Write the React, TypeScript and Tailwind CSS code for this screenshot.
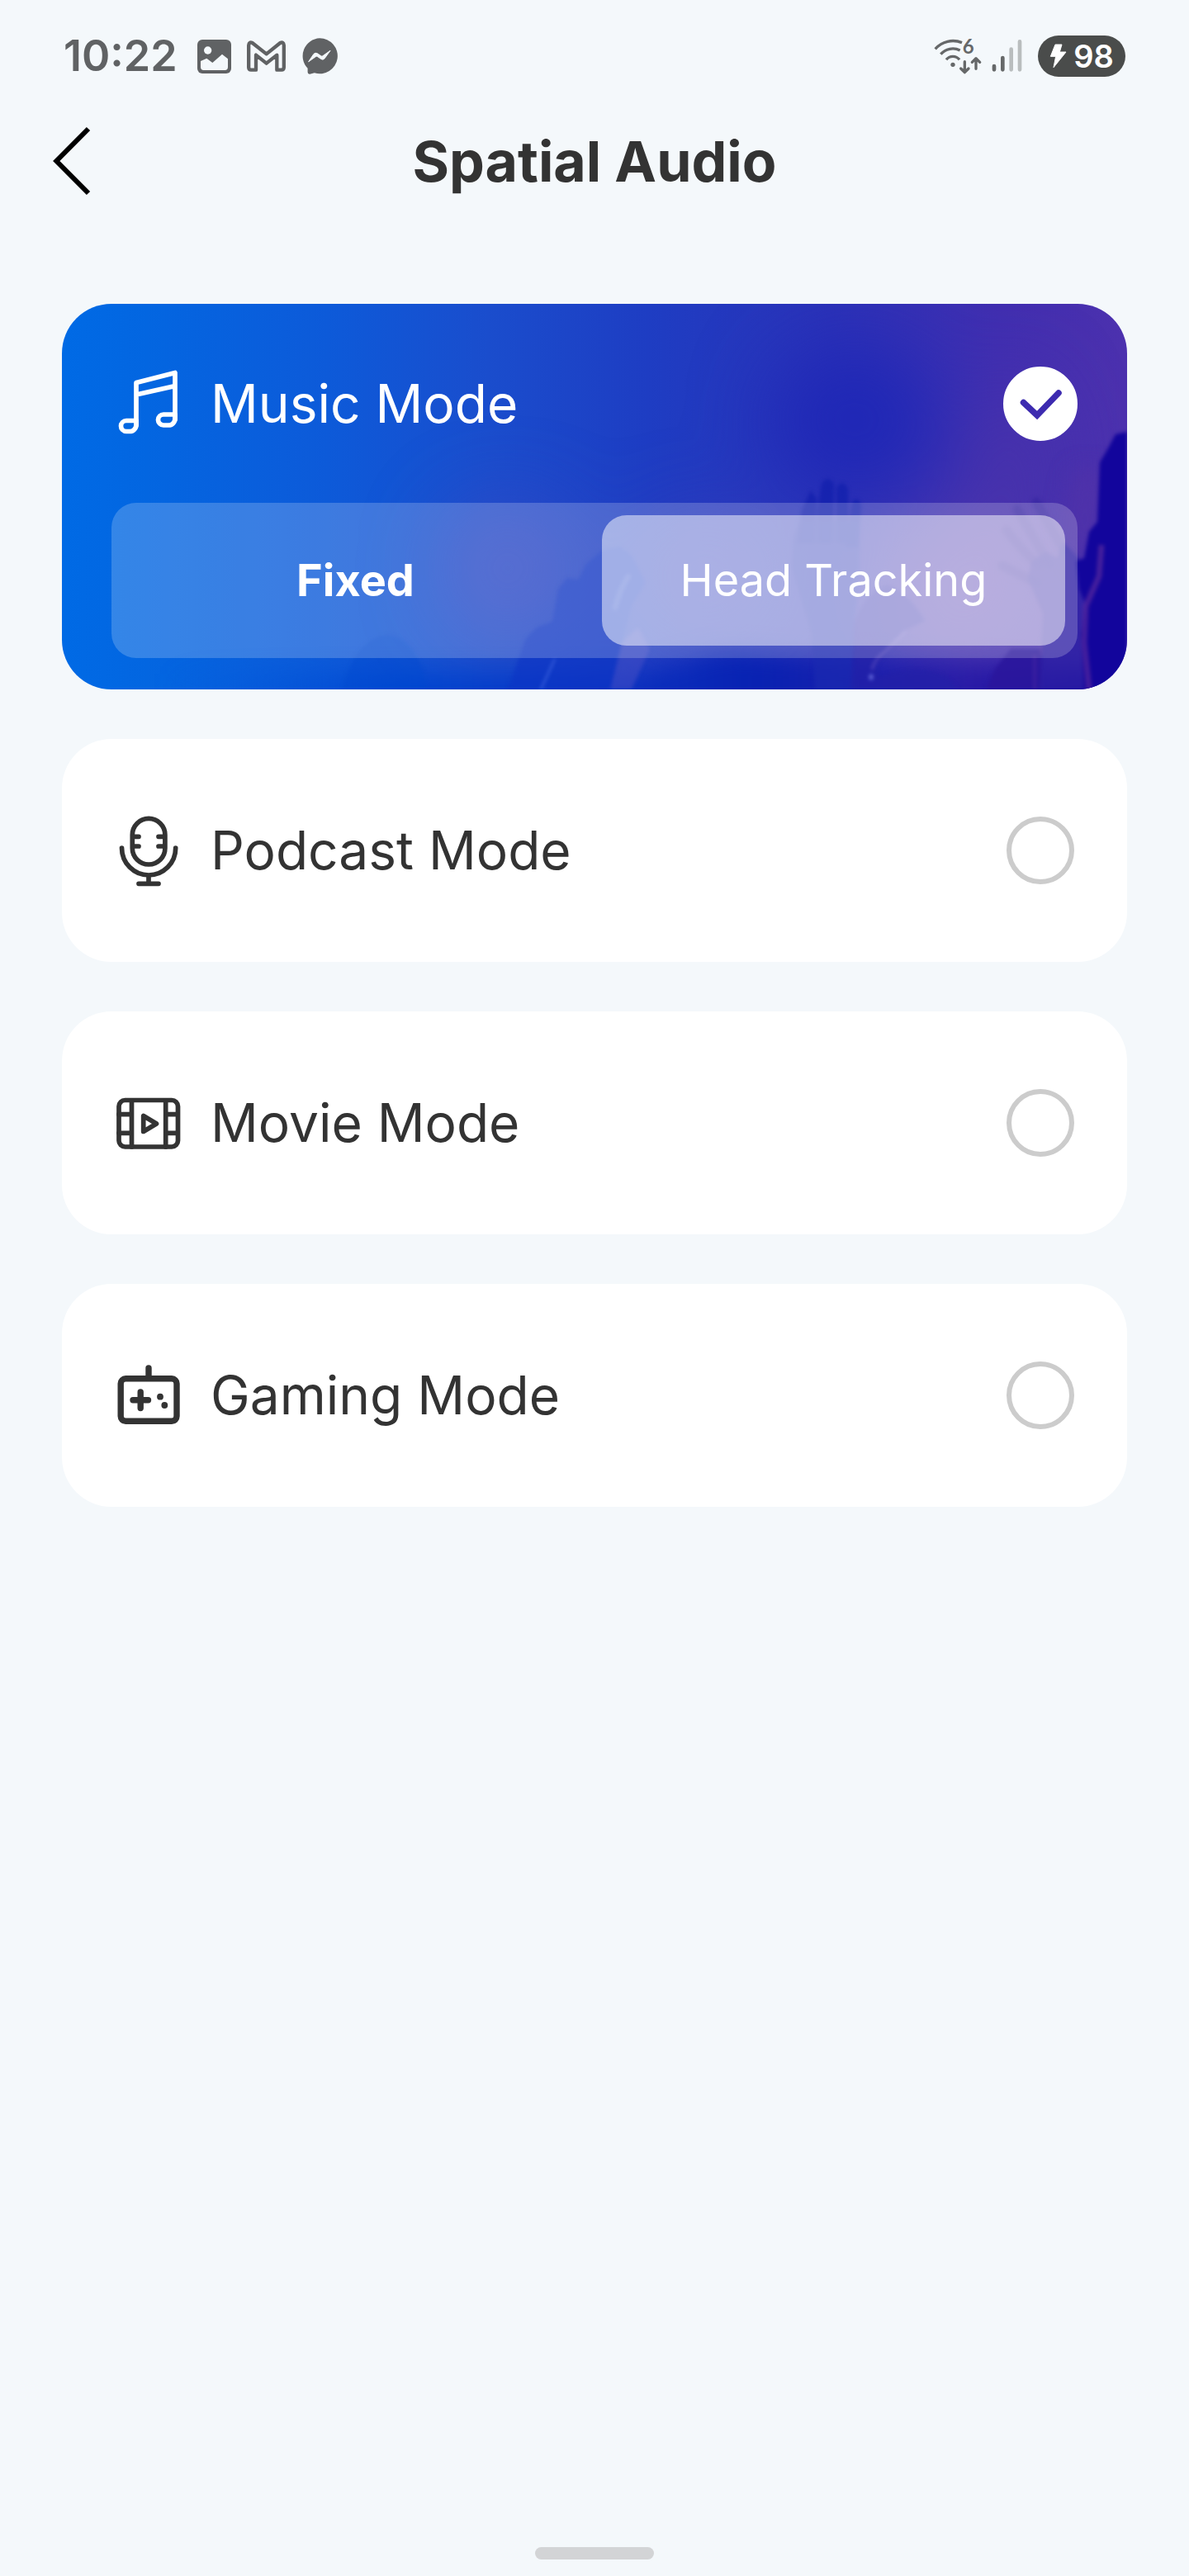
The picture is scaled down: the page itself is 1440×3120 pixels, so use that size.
import React, { useState } from "react";

function ImageIcon() {
  return (
    <svg viewBox="0 0 123 123" className="size-[41px]" aria-hidden="true">
      <rect width="123" height="123" rx="18" fill="#606264" />
      <circle cx="38" cy="39" r="14" fill="#f4f8fb" />
      <path d="M12 78 34 68 55 84 90 53 111 70V100q0 11-11 11H23q-11 0-11-11z" fill="#f4f8fb" />
    </svg>
  );
}

function GmailIcon() {
  return (
    <svg viewBox="0 0 141 114" className="h-[38px] w-[47px]" fill="none" stroke="#606264" strokeWidth="13" strokeLinejoin="round" aria-hidden="true">
      <path d="M6.500 18Q8 3 20 9L71 49 121 9Q133 3 134.500 18V98Q134 107 126 107H109V53L71 83 33 53V107H15Q7 107 6.500 98Z" />
    </svg>
  );
}

function MessengerIcon() {
  return (
    <svg viewBox="0 0 133 133" className="size-[44px]" aria-hidden="true">
      <path d="M67 1a65 65 0 1 1-19 127l-17 4q-8 1-8-7v-14A65 65 0 0 1 67 1z" fill="#606264" />
      <path d="M26 87 45 59q6-7 14-2l13 9q3 2 6 0l28-20-21 29q-6 7-13 2L59 68q-3-2-6 0z" fill="#f4f8fb" stroke="#f4f8fb" strokeWidth="3" strokeLinejoin="round" />
    </svg>
  );
}

function NetworkIcon() {
  return (
    <svg viewBox="96 80 318 132" className="h-[44px] w-[106px] overflow-visible" fill="none" stroke="#666869" strokeLinecap="round" strokeLinejoin="round" aria-hidden="true">
      <g strokeWidth="10">
        <path strokeLinecap="butt" d="M98 120A86 86 0 0 1 195 97" />
        <path strokeLinecap="butt" d="M118 139A58 58 0 0 1 188 125" />
        <path strokeLinecap="butt" d="M138 159A30 30 0 0 1 186 159" />
      </g>
      <circle cx="162" cy="177" r="8" fill="#666869" stroke="none" />
      <text x="197" y="138" fontSize="72" fontWeight="700" fill="#666869" stroke="none" fontFamily="Lato, sans-serif">6</text>
      <path strokeWidth="10" d="M205 166V204M191 191 205 205 219 191M246 192V155M232 168 246 154 260 168" />
      <g strokeWidth="14">
        <path d="M312 182V195M343 152V195" />
        <path stroke="#b9bdbe" d="M374 121V195M405 93V195" />
      </g>
    </svg>
  );
}

function BoltIcon() {
  return (
    <svg viewBox="510 98 63 90" className="h-[30px] w-[21px]" aria-hidden="true">
      <path d="M531 101H555L547 128H570L525 184 533 144H514Z" fill="#fff" stroke="#fff" strokeWidth="3" strokeLinejoin="round" />
    </svg>
  );
}

const iconProps = {
  viewBox: "0 0 90 90",
  className: "size-[90px]",
  fill: "none",
  stroke: "currentColor",
  strokeWidth: 5.7,
  strokeLinecap: "round" as const,
  strokeLinejoin: "round" as const,
  "aria-hidden": true,
};

function MusicIcon() {
  return (
    <svg {...iconProps}>
      <path d="M30 71V19.500L77 7.500V64M30 34 77 23.500" />
      <path d="M30 65.500H18a6.500 6.500 0 0 0 0 13h4a8 8 0 0 0 8-8zM77 58H63a6.500 6.500 0 0 0 0 13h6a8 8 0 0 0 8-8z" />
    </svg>
  );
}

function MicIcon() {
  return (
    <svg {...iconProps}>
      <rect x="25.300" y="6.400" width="39.600" height="55.600" rx="19.800" />
      <path d="M26 28.300H33M26 40H33M57 28.300H64M57 40H64M12.500 42a32.600 33 0 0 0 65.200 0M45 76V85M33 85.300H57" />
    </svg>
  );
}

function MovieIcon() {
  return (
    <svg {...iconProps}>
      <rect x="9" y="17.500" width="71.500" height="56.500" rx="7.500" />
      <path d="M24.500 18V74M65.700 18V74M9 34.700H24M9 57.300H24M66 34.700H80M66 57.300H80" />
      <path d="M38.700 36.500V55.500L54.500 46Z" />
    </svg>
  );
}

function GameIcon() {
  return (
    <svg {...iconProps} strokeWidth={7.4}>
      <rect x="11.200" y="24.800" width="67.800" height="51.500" rx="6" />
      <path d="M45 12V24M35.200 41V60.500M26 50.700H44.500" />
      <g fill="currentColor" stroke="none">
        <circle cx="59" cy="46.700" r="3.900" />
        <circle cx="64.300" cy="57" r="3.900" />
      </g>
    </svg>
  );
}

function ConcertArt() {
  return (
    <svg viewBox="0 0 1290 467" preserveAspectRatio="none" className="absolute inset-0 size-full" aria-hidden="true">
      <defs>
        <linearGradient id="sky">
          <stop offset="0" stopColor="#006ae5" />
          <stop offset=".08" stopColor="#0366e1" />
          <stop offset=".25" stopColor="#0d5ad9" />
          <stop offset=".4" stopColor="#1a4dcd" />
          <stop offset=".55" stopColor="#1e3dc3" />
          <stop offset=".72" stopColor="#2b32b8" />
          <stop offset=".88" stopColor="#402eb0" />
          <stop offset="1" stopColor="#4c31ae" />
        </linearGradient>
        <linearGradient id="floor" gradientUnits="userSpaceOnUse" x1="0" y1="0" x2="1290" y2="0">
          <stop offset=".1" stopColor="#005ade" stopOpacity="0" />
          <stop offset=".32" stopColor="#0046d0" />
          <stop offset=".5" stopColor="#0c34c2" />
          <stop offset=".65" stopColor="#0822b2" />
          <stop offset=".85" stopColor="#2a1ca6" />
          <stop offset="1" stopColor="#10009a" />
        </linearGradient>
        <filter id="far" colorInterpolationFilters="sRGB" filterUnits="userSpaceOnUse" x="-200" y="-200" width="1700" height="900"><feGaussianBlur stdDeviation="48" /></filter>
        <filter id="mid" colorInterpolationFilters="sRGB" filterUnits="userSpaceOnUse" x="-200" y="-200" width="1700" height="900"><feGaussianBlur stdDeviation="14" /></filter>
        <filter id="near" colorInterpolationFilters="sRGB" filterUnits="userSpaceOnUse" x="-200" y="-200" width="1700" height="900"><feGaussianBlur stdDeviation="2" /></filter>
      </defs>
      <rect width="1290" height="467" fill="url(#sky)" />
      <g filter="url(#far)">
        <ellipse cx="960" cy="140" rx="100" ry="90" fill="#1c26b6" opacity=".85" />
        <ellipse cx="1150" cy="200" rx="45" ry="110" fill="#4b35aa" opacity=".8" />
        <ellipse cx="540" cy="320" rx="80" ry="80" fill="#3c48c2" opacity=".65" />
        <ellipse cx="780" cy="330" rx="90" ry="80" fill="#3a3cba" opacity=".5" />
        <ellipse cx="1090" cy="350" rx="90" ry="90" fill="#5238ac" opacity=".8" />
      </g>
      <path d="M1225 200H1262V290L1236 325 1212 270Z" fill="#5634a6" opacity=".5" filter="url(#mid)" />
      <path d="M130 448H700L800 420 920 428 1330 448V500H130Z" fill="url(#floor)" filter="url(#mid)" />
      <g filter="url(#near)">
        <path d="M340 467Q355 405 395 401 432 405 442 467Z" fill="#0048d0" opacity=".4" />
        <path d="M540 467 562 405 575 392 594 385 601 345 612 332 625 334 635 315 655 298 676 294 690 305 707 338 690 365 680 405 668 467Z" fill="#0c33c4" opacity=".6" />
        <path d="M664 467 678 410 698 392 712 418 690 467Z" fill="#4a50c6" opacity=".5" />
        <path d="M670 368Q676 345 686 330" stroke="#5a72d6" strokeWidth="6" strokeLinecap="round" fill="none" opacity=".35" />
        <path d="M580 467 597 430" stroke="#3a60dc" strokeWidth="2" />
        <path d="M907 226 914 236 913 290H890L896 250ZM920 218Q927 206 935 218L934 290H915V250ZM938 224Q944 210 952 224L953 290H938ZM957 240Q964 232 968 244L965 295H948Z" fill="#1421ae" opacity=".85" />
        <path d="M894 262 886 285 884 320 896 360 908 400 912 467H962L960 385 966 330 966 262Z" fill="#1a2ab0" opacity=".65" />
        <path d="M959 390Q970 350 1000 340 1028 352 1045 384L1024 394 985 440 990 452Q1060 430 1085 467H955Z" fill="#2420a8" opacity=".65" />
        <path d="M981 443Q984 430 996 422 1010 408 1022 396" stroke="#6f5bc8" strokeWidth="3" fill="none" opacity=".5" />
        <path d="M980 451V453" stroke="#6064d8" strokeWidth="5" strokeLinecap="round" />
        <path d="M1120 467 1130 442 1149 418H1188V467Z" fill="#2a169c" opacity=".9" />
        <g stroke="#3a28a4" strokeLinecap="round" fill="none" strokeWidth="11" opacity=".8">
          <path d="M1144 274Q1160 296 1182 316M1157 249 1195 315M1180 240 1214 300M1139 317 1180 338" />
        </g>
        <path d="M1174 312 1192 300 1205 308 1212 288 1234 310 1238 340 1242 467H1184L1188 375 1170 334Z" fill="#2c20a4" opacity=".75" />
        <path d="M1290 155 1276 158 1267 175 1257 192 1254 264 1244 276 1238 308 1228 312 1232 345 1240 365 1234 400 1238 467H1290Z" fill="#12059c" />
        <path d="M1259 292 1256 330 1240 366 1238 410 1244 467" stroke="#54279e" strokeWidth="7" fill="none" opacity=".75" />
        <path d="M1178 425V467M1186 412V425" stroke="#5530a6" strokeWidth="2" opacity=".7" />
      </g>
    </svg>
  );
}

const modes = [
  { id: "podcast", name: "Podcast Mode", Icon: MicIcon },
  { id: "movie", name: "Movie Mode", Icon: MovieIcon },
  { id: "gaming", name: "Gaming Mode", Icon: GameIcon },
];

export default function App() {
  const [mode, setMode] = useState("music");

  return (
    <div className="flex min-h-screen flex-col bg-[#f4f8fb] font-['Inter',sans-serif] text-[#333]">
      <div className="flex h-[136px] items-center justify-between px-[77px]">
        <div className="flex items-center">
          <span className="mr-6 text-[52px] leading-none font-semibold text-[#606264]">10:22</span>
          <div className="flex items-center gap-[19px]">
            <ImageIcon />
            <GmailIcon />
            <MessengerIcon />
          </div>
        </div>
        <div className="flex items-center gap-[19px]">
          <NetworkIcon />
          <div className="flex h-[50px] w-[106px] items-center justify-center gap-2 rounded-full bg-[#4a4c4b] text-[38px] leading-none font-semibold text-white">
            <BoltIcon />
            98
          </div>
        </div>
      </div>

      <header className="grid h-[118px] grid-cols-[1fr_auto_1fr] items-center px-[60px]">
        <button type="button" aria-label="Back" className="w-[52px]">
          <svg viewBox="0 0 52 84" className="h-[84px] w-[52px]" fill="none" stroke="#000" strokeWidth="6" aria-hidden="true">
            <path d="M47 3 8.300 42 47 81" />
          </svg>
        </button>
        <h1 className="text-[68px] leading-none font-bold">Spatial Audio</h1>
      </header>

      <main className="mt-[114px] flex flex-col gap-[60px] px-[75px]">
        <section className="relative overflow-hidden rounded-[60px] px-[60px] pt-[76px] pb-[38px] text-white">
          <ConcertArt />
          <div className="relative">
            <label className="flex items-center gap-[30px]">
              <MusicIcon />
              <span className="flex-1 text-[64px] leading-none">Music Mode</span>
              <span className="relative size-[90px]">
                <input type="radio" name="mode" checked={mode === "music"} onChange={() => setMode("music")} className="peer block size-[90px] appearance-none rounded-full border-[5px] border-white checked:bg-white" />
                <svg viewBox="0 0 90 90" className="pointer-events-none absolute inset-0 hidden size-[90px] peer-checked:block" fill="none" stroke="#3d2bb0" strokeWidth="7.500" strokeLinecap="round" aria-hidden="true">
                  <path d="M24.500 43.500 41 59 67 32" />
                </svg>
              </span>
            </label>
            <div className="mt-[75px] grid grid-cols-2 gap-[18px] rounded-[30px] bg-white/20 p-[15px] text-[54px] leading-none">
              <button type="button" className="h-[158px] rounded-[30px] font-bold">Fixed</button>
              <button type="button" className="h-[158px] rounded-[30px] bg-white/50">Head Tracking</button>
            </div>
          </div>
        </section>

        {modes.map(({ id, name, Icon }) => (
          <label key={id} className="flex items-center gap-[30px] rounded-[60px] bg-white px-[60px] py-[90px]">
            <Icon />
            <span className="flex-1 text-[64px] leading-none">{name}</span>
            <input type="radio" name="mode" checked={mode === id} onChange={() => setMode(id)} className="m-1 size-[82px] appearance-none rounded-full border-[6px] border-[#ccc] checked:border-[24px] checked:border-[#006ae5]" />
          </label>
        ))}
      </main>

      <div className="mx-auto mt-auto mb-5 h-[15px] w-36 rounded-full bg-[#d3d4d6]" />
    </div>
  );
}
